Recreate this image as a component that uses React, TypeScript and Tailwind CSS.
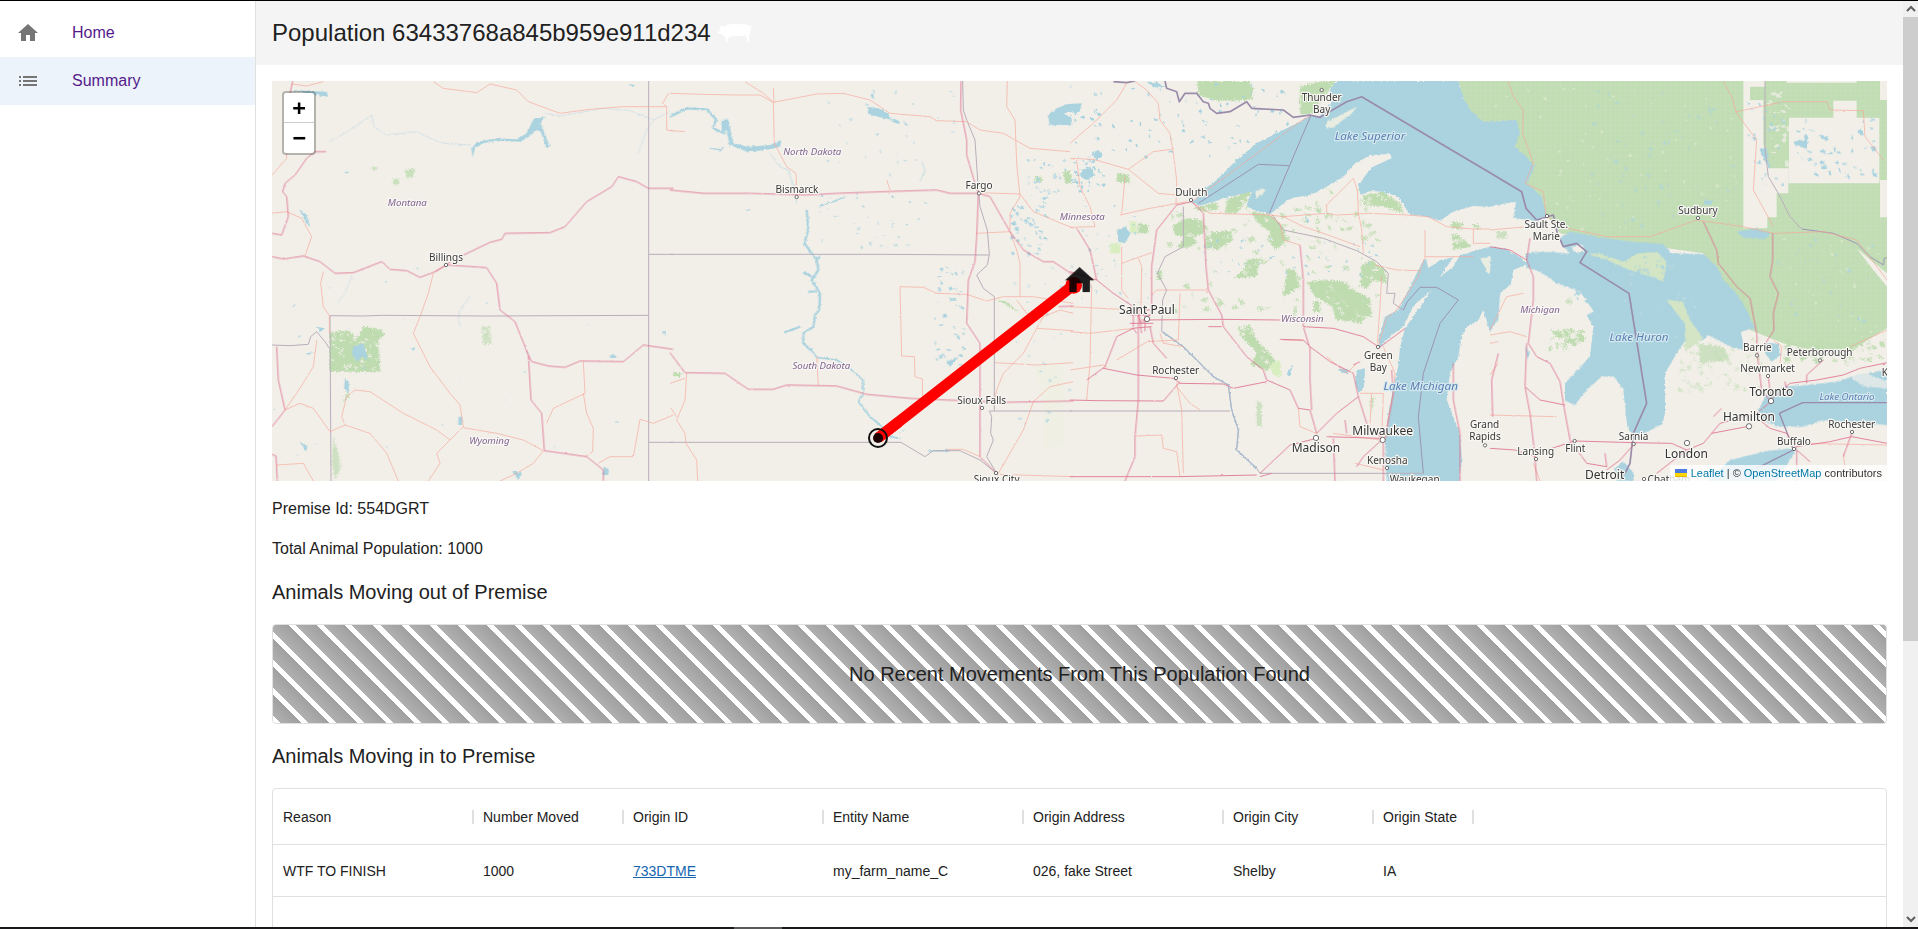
import type { ReactNode } from "react";

type Label = { t: string; x: number; y: number; k?: "city" | "big" | "state" | "lake" | "lakeSmall" };

// The map is drawn in units of a third of a pixel, in four side-by-side tiles.
const TILE_A = "translate(-6 -3)";
const TILE_B = "translate(1194 -3)";
const TILE_C = "translate(2394 -3)";
const TILE_D = "translate(3654 -3)";

const WATER = "#aad3df";
const LAND = "#f2efe9";
const FOREST = "#bedcb0";

function speckles(seed: number, count: number, x: number, y: number, w: number, h: number, size: number) {
  let s = seed;
  const next = () => {
    s = (s * 16807) % 2147483647;
    return s / 2147483647;
  };
  let d = "";
  for (let i = 0; i < count; i++) {
    const px = Math.round(x + next() * w);
    const py = Math.round(y + next() * h);
    const a = Math.round(2 + next() * size);
    const b = Math.round(2 + next() * size);
    const c = Math.round((next() - 0.4) * size);
    d += `M${px} ${py}l${a} ${-c}l${Math.round(a / 2)} ${b}l${-a} ${c}z`;
  }
  return d;
}

const labels: { tile: string; items: Label[] }[] = [
  {
    tile: TILE_A,
    items: [
      { t: "Montana", x: 412, y: 378, k: "state" },
      { t: "Billings", x: 528, y: 542 },
      { t: "Wyoming", x: 658, y: 1091, k: "state" },
    ],
  },
  {
    tile: TILE_B,
    items: [
      { t: "North Dakota", x: 427, y: 225, k: "state" },
      { t: "Bismarck", x: 381, y: 340 },
      { t: "Fargo", x: 927, y: 326 },
      { t: "South Dakota", x: 454, y: 867, k: "state" },
      { t: "Sioux Falls", x: 935, y: 971 },
      { t: "Sioux City", x: 980, y: 1210 },
      { t: "Minnesota", x: 1237, y: 419, k: "state" },
    ],
  },
  {
    tile: TILE_C,
    items: [
      { t: "Thunder", x: 755, y: 63 },
      { t: "Bay", x: 755, y: 99 },
      { t: "Lake Superior", x: 900, y: 180, k: "lake" },
      { t: "Duluth", x: 364, y: 347 },
      { t: "Saint Paul", x: 231, y: 701, k: "big" },
      { t: "Wisconsin", x: 697, y: 727, k: "state" },
      { t: "Rochester", x: 317, y: 881 },
      { t: "Green", x: 925, y: 836 },
      { t: "Bay", x: 925, y: 872 },
      { t: "Lake Michigan", x: 1052, y: 931, k: "lake" },
      { t: "Milwaukee", x: 938, y: 1066, k: "big" },
      { t: "Madison", x: 738, y: 1116, k: "big" },
      { t: "Kenosha", x: 952, y: 1152 },
      { t: "Waukegan", x: 1034, y: 1208 },
      { t: "Grand", x: 1244, y: 1045 },
      { t: "Rapids", x: 1245, y: 1081 },
    ],
  },
  {
    tile: TILE_D,
    items: [
      { t: "Sudbury", x: 624, y: 403 },
      { t: "Sault Ste.", x: 169, y: 443 },
      { t: "Marie", x: 169, y: 479 },
      { t: "Michigan", x: 150, y: 700, k: "state" },
      { t: "Lake Huron", x: 447, y: 782, k: "lake" },
      { t: "Barrie", x: 802, y: 812 },
      { t: "Peterborough", x: 989, y: 829 },
      { t: "Newmarket", x: 833, y: 876 },
      { t: "Toronto", x: 844, y: 949, k: "big" },
      { t: "Lake Ontario", x: 1071, y: 961, k: "lakeSmall" },
      { t: "Hamilton", x: 777, y: 1023, k: "big" },
      { t: "Rochester", x: 1085, y: 1045 },
      { t: "Buffalo", x: 912, y: 1096 },
      { t: "Sarnia", x: 431, y: 1079 },
      { t: "Flint", x: 256, y: 1117 },
      { t: "Lansing", x: 137, y: 1124 },
      { t: "London", x: 589, y: 1133, k: "big" },
      { t: "Detroit", x: 344, y: 1196, k: "big" },
      { t: "Chatham", x: 537, y: 1209 },
      { t: "Kingston", x: 1238, y: 888 },
    ],
  },
];

const labelStyles = {
  city: { size: 30, fill: "#3a3a3a", italic: false },
  big: { size: 36, fill: "#333333", italic: false },
  state: { size: 29, fill: "#82648f", italic: true },
  lake: { size: 35, fill: "#5a7fb4", italic: true },
  lakeSmall: { size: 29, fill: "#5a7fb4", italic: true },
};

function MapLabels() {
  return (
    <>
      {labels.map((group) => (
        <g key={group.tile} transform={group.tile}>
          {group.items.map((l) => {
            const s = labelStyles[l.k ?? "city"];
            const halo = l.k === "lake" || l.k === "lakeSmall" ? "#d5e9ef" : "#f8f7f4";
            return (
              <text
                key={l.t + l.x + l.y}
                x={l.x}
                y={l.y}
                textAnchor="middle"
                fontSize={s.size}
                fontStyle={s.italic ? "italic" : "normal"}
                fill={s.fill}
                stroke={halo}
                strokeWidth={7}
                strokeLinejoin="round"
                paintOrder="stroke"
              >
                {l.t}
              </text>
            );
          })}
        </g>
      ))}
    </>
  );
}

function Dots({ tile, small, large = [] }: { tile: string; small: number[][]; large?: number[][] }) {
  return (
    <g transform={tile} fill="#ffffff" stroke="#555555" strokeWidth={2.5}>
      {small.map(([x, y]) => (
        <circle key={`${x}-${y}`} cx={x} cy={y} r={5} />
      ))}
      {large.map(([x, y]) => (
        <circle key={`${x}-${y}`} cx={x} cy={y} r={8} />
      ))}
    </g>
  );
}

function MapDrawing() {
  return (
    <svg
      className="block h-full w-full"
      viewBox="0 0 4845 1200"
      preserveAspectRatio="xMidYMid slice"
      fontFamily='"Noto Sans", sans-serif'
      role="img"
      aria-label="Map of population movements"
    >
      <defs>
        <filter id="coast" x="0" y="0" width="100%" height="100%">
          <feTurbulence type="fractalNoise" baseFrequency="0.12" numOctaves={3} seed={4} />
          <feDisplacementMap in="SourceGraphic" scale={9} xChannelSelector="R" yChannelSelector="G" />
        </filter>
        <filter id="wood" x="0" y="0" width="100%" height="100%">
          <feTurbulence type="fractalNoise" baseFrequency="0.2" numOctaves={2} seed={9} />
          <feDisplacementMap in="SourceGraphic" scale={18} xChannelSelector="R" yChannelSelector="G" />
        </filter>
        <filter id="road" x="0" y="0" width="100%" height="100%">
          <feTurbulence type="fractalNoise" baseFrequency="0.09" numOctaves={2} seed={2} />
          <feDisplacementMap in="SourceGraphic" scale={5} xChannelSelector="R" yChannelSelector="G" />
        </filter>
        <pattern id="grid" width="15" height="15" patternUnits="userSpaceOnUse">
          <rect width="15" height="15" fill="#c0ddb4" />
          <path d="M0 0H15M0 0V15" stroke="#cfe3c4" strokeWidth={2} />
        </pattern>
      </defs>

      <rect width="4845" height="1200" fill={LAND} />

      {/* Forests and parks */}
      <g transform={TILE_D}>
        <path
          fill="url(#grid)"
          d="M-95 3H1191V745L1100 800 990 815 880 790 780 750 640 520 500 500 340 485 210 460 170 405 80 370 0 130-60 125Z"
        />
        <g fill={LAND}>
          <path d="M760 3H825V20H780V60H820V190L835 265H895V340H860V412H832V445H760Z" />
          <path d="M897 113H1168V310H895V265H897ZM1030 62H1100V113H1030ZM890 3H1100V8H890ZM1170 3H1191V60H1170ZM1170 300H1191V412H1170Z" />
          <path d="M1100 505L1191 580V620L1150 570Z" />
        </g>
        <path d={speckles(102, 70, 0, 10, 740, 440, 7)} fill="#dde9d0" opacity={0.7} />
        <path d={speckles(105, 40, 870, 470, 310, 300, 7)} fill="#dde9d0" opacity={0.7} />
        <path d={speckles(108, 30, 830, 20, 60, 240, 12)} fill={LAND} opacity={0.7} />
      </g>
      <g filter="url(#wood)">
        <g transform={TILE_A} fill={FOREST}>
          <path d="M178 755L235 752 262 775 280 740 335 750 345 765 325 780 330 875H178Z" />
          <path d={speckles(120, 45, 180, 755, 140, 110, 7)} fill={LAND} />
          <path d="M635 740L660 738 668 790 640 795Z M190 1070L205 1120 213 1160 195 1200 185 1150Z M215 970L235 930 240 950Z" opacity={0.7} />
          <path d={speckles(121, 14, 635, 740, 30, 50, 7)} fill={LAND} />
          <path d="M370 295L390 298 385 315 368 315ZM405 270L435 265 430 290 410 295ZM308 260H320V270H308Z" opacity={0.8} />
        </g>
        <g transform={TILE_C} fill={FOREST}>
          <path d="M380 3H535L550 25 545 60 440 62 385 45ZM690 20L745 5H800L760 50 730 100 690 105Z" />
          <path d="M310 435L350 415 400 420 400 460 370 470 380 490 350 505 320 500 345 470 312 465ZM410 460L480 450 490 480 440 510 405 505ZM470 360L540 330 545 345 500 400 465 400ZM545 395L600 405 640 440 650 480 620 510 590 480 600 455 560 425ZM370 385L440 365 445 390 400 395Z" />
          <path d="M530 540L570 535 560 590 490 595 520 570ZM650 565L675 570 690 620 640 650ZM710 605L770 600 830 605 840 625 900 655 905 700 870 730 795 720 790 680 735 650ZM875 555L905 540 945 570 950 610 910 600 890 625 870 620Z" />
          <path d="M505 740L540 735 560 780 600 820 620 850 590 870 540 855 560 820 510 765ZM730 665H750V695H730ZM880 345L940 335 990 370 1000 400 940 380 880 375ZM260 575L275 570 275 600 262 600ZM205 430L235 435 235 460 205 460ZM140 280L175 285 180 310 140 305ZM1145 425L1180 430 1175 450 1145 445ZM1145 460L1165 465 1205 500 1150 510ZM1205 435L1230 435 1225 450ZM-20 280L5 285 5 310-15 310Z" />
          <g fill={LAND}>
            <path d={speckles(130, 60, 310, 330, 340, 180, 8)} />
            <path d={speckles(131, 80, 640, 540, 310, 190, 8)} />
            <path d={speckles(132, 30, 500, 730, 120, 140, 8)} />
            <path d={speckles(133, 25, 880, 335, 120, 60, 9)} />
            <path d={speckles(134, 20, 1145, 420, 70, 90, 8)} />
            <path d={speckles(135, 12, 490, 535, 80, 60, 7)} />
          </g>
          <path d="M600 850L630 840 635 890 605 885Z M180 425H200V460H180Z M120 490L150 490 150 520 120 520Z" fill="#d9eec0" />
          <path d="M560 965H575V1040H560ZM900 960L915 945 905 1000Z" opacity={0.7} />
          <path d={speckles(71, 90, 290, 380, 640, 330, 16)} opacity={0.8} />
          <path d={speckles(22, 40, 520, 320, 420, 130, 12)} opacity={0.8} />
        </g>
        <g transform={TILE_B} fill={FOREST}>
          <path d="M10 875L35 880 30 892 12 888ZM975 655L1010 665 1050 700 1010 675ZM1180 275L1200 270V300L1185 298ZM1095 290H1115V305H1095Z" />
          <path d="M1090 860L1180 850V1100H1120V960Z" fill="#eaf2da" opacity={0.4} />
        </g>
        <g transform={TILE_D} fill={FOREST}>
          <path d={speckles(15, 40, 175, 745, 95, 60, 14)} />
          <path d={speckles(91, 110, 560, 770, 250, 160, 10)} opacity={0.55} />
          <path d={speckles(37, 70, 880, 780, 300, 60, 14)} />
          <path d="M625 790L700 800 720 840 630 850ZM20 455H50V475H20ZM230 655H245V672H230Z" opacity={0.7} />
        </g>
      </g>

      {/* Lakes and rivers */}
      <g filter="url(#coast)">
        <g transform={TILE_C} fill={WATER}>
          <path d="M365 368L400 330 440 300 500 240 560 190 620 160 690 125 715 108 750 108 790 60 775 35 800 3H1165L1180 50 1200 90 1240 125 1340 120 1350 160 1335 200 1370 230 1395 260 1370 310 1415 350 1425 390 1430 405 1400 425 1380 420 1330 415 1338 365 1280 375 1260 380 1210 378 1150 395 1110 422 1060 408 1020 405 985 350 940 335 900 333 872 345 865 315 905 262 965 235 960 222 900 225 850 255 820 290 770 320 720 345 660 355 600 403 550 390 530 375 545 335 500 345 440 362 390 377Z" />
          <path d="M950 1203L945 1090 955 1000 975 900 985 860 990 800 1005 745 1050 680 1085 630 1060 650 1030 680 1000 740 965 765 930 800 925 780 945 710 985 690 1020 620 1055 550 1068 535 1075 565 1110 540 1150 532 1110 590 1150 560 1170 525 1260 500 1300 505 1350 530 1372 552 1330 570 1322 615 1290 640 1285 720 1260 755 1240 690 1225 720 1190 740 1175 770 1165 830 1140 880 1130 960 1150 1010 1170 1060 1175 1130 1168 1203Z" />
          <path d="M862 870L885 865 882 920 865 938 855 910ZM803 868L830 865 835 880 815 878ZM140 450L165 440 182 460 165 490 145 485ZM65 220L85 210 98 225 80 240ZM35 270L60 260 75 285 50 300 30 290ZM230 5L260 8 290 20 250 22ZM655 870L668 855 660 890 650 885Z" />
          <path d="M705 405L718 425 712 430Z" />
          <path d={speckles(11, 90, 0, 10, 680, 220, 8)} />
          <path d={speckles(5, 34, 0, 220, 100, 120, 8)} />
          <path d={speckles(17, 50, 400, 470, 520, 110, 7)} opacity={0.9} />
          <path d={speckles(29, 40, 0, 340, 320, 340, 6)} opacity={0.7} />
        </g>
        <g transform={TILE_D} fill={WATER}>
          <path d="M108 520L160 515 240 520 215 495 210 475 240 455 330 472 420 485 520 492 545 520 640 522 680 560 700 600 740 640 770 690 795 745 752 755 765 810 720 800 655 765 632 785 625 750 590 775 560 820 525 880V1000L518 1030 480 1052 430 1078 412 1040 400 930 372 890 335 890 290 930 255 975 225 962 225 910 300 830 310 740 290 705 312 695 270 635 200 610 150 575 108 562Z" />
          <path d="M650 1203L720 1140 830 1113 922 1103 900 1140 860 1203ZM800 1000L830 942 880 920 950 915 1040 905 1100 885 1191 870V1035L1000 1020 940 1040 870 1040 815 1022Z" />
          <path d="M375 1165L400 1145 432 1180V1203H380ZM825 790L865 790 872 825 845 845 825 820ZM740 455L800 445 842 460 825 478 760 472ZM105 800L120 820 112 838ZM808 205L830 205 838 260 822 240ZM925 180L955 180 950 205 928 198ZM645 360L668 362 662 375 640 372Z" />
          <path d={speckles(41, 50, 910, 120, 240, 170, 12)} />
          <path d={speckles(58, 60, 300, 10, 450, 430, 9)} opacity={0.6} />
          <path d={speckles(63, 30, 860, 470, 320, 260, 9)} opacity={0.6} />
          <path d={speckles(77, 20, 250, 580, 60, 80, 9)} />
          <path d={speckles(79, 26, 770, 60, 110, 260, 8)} />
          <path d="M1080 890L1130 880 1191 905V925L1120 920Z" fill={LAND} opacity={0.7} />
        </g>
        <g transform={TILE_B} fill={WATER}>
          <path d="M1135 105L1160 85 1195 72 1235 70 1230 95 1180 100 1205 115 1203 135 1138 136Z" />
          <path d="M592 80L625 85 655 100 665 120 625 110 595 102ZM670 115L690 125 688 132 665 125ZM700 120L715 138 705 135ZM155 120L175 118 190 190 235 200 300 195 335 180 330 200 300 208 235 216 178 195 170 150 155 160Z" />
          <path d="M830 845L865 830 850 850 840 860ZM840 655H860V662H840ZM600 45L610 40 612 60Z" />
          <path d={speckles(13, 45, 1020, 340, 100, 180, 9)} />
          <path d={speckles(31, 30, 1070, 230, 120, 120, 7)} />
          <path d={speckles(19, 45, 790, 560, 90, 300, 8)} />
          <path d={speckles(23, 35, 440, 330, 330, 170, 6)} opacity={0.8} />
          <path d={speckles(67, 30, 470, 30, 380, 260, 6)} opacity={0.7} />
          <path d={speckles(83, 22, 1030, 560, 170, 520, 7)} opacity={0.7} />
          <g fill="none" stroke={WATER} strokeLinejoin="round">
            <path strokeWidth={7} d="M0 110L50 85 110 88 138 118 130 145 165 160" />
            <path strokeWidth={7} d="M410 390L415 450 403 490 440 540 445 570 425 600 450 640 448 690 435 705 430 740 400 760 400 790 425 812M345 757L390 740M440 540L450 530M400 577L425 590M415 635H440" />
            <path strokeWidth={5} d="M425 812L440 832 500 840 545 870 578 900 580 940 565 965 600 1010 635 1040 660 1070 690 1075M775 1113L840 1112" />
            <path strokeWidth={4} d="M450 378L490 365 525 350M120 205L155 210 160 200M225 390H240" />
            <path strokeWidth={2} d="M300 220L330 260 355 270 370 320 380 370M755 245L765 270 750 305M690 1060L705 1045" />
          </g>
        </g>
        <g transform={TILE_A} fill={WATER}>
          <path d="M790 118L825 110 812 130 822 155 840 200 830 205 812 155 800 150 775 172 750 185 680 182 640 190 615 205 608 230 603 205 625 185 680 175 740 178 770 160Z" />
          <path d="M88 388L110 405 120 438 108 430ZM250 800L280 790 295 840 275 830 262 845 245 820ZM225 895L238 910 235 940 222 925ZM60 30L170 35 175 50 120 42ZM420 803L435 805 430 812ZM565 1010H576V1035H565ZM90 1085L112 1100 108 1115ZM140 740L165 745 150 755ZM1175 755L1187 752V768ZM1020 826H1038V834H1020ZM1000 1165H1015V1185H1000ZM725 1172L755 1178 745 1200ZM108 820L130 817 115 825ZM1075 12L1095 15 1088 22ZM225 275H235V280H225Z" />
          <path d={speckles(97, 24, 10, 500, 1120, 640, 5)} opacity={0.7} />
          <path fill="none" stroke="#cfdfe4" strokeWidth={2.5} d="M180 185L240 150 305 105 312 140 350 165 440 155 480 175 520 190 603 195M825 100L870 108 1000 85 1080 92 1150 120 1130 150 1105 220M600 650L570 690 565 720 572 740M245 590L225 640 200 670M1150 120L1200 95" />
        </g>
      </g>

      {/* Islands and peninsulas inside the lakes */}
      <g filter="url(#coast)">
        <path transform={TILE_C} fill="#e9ece0" d="M765 145L772 125 862 80 845 100 790 142ZM1230 535L1262 530 1260 590ZM555 335L575 325 590 330 560 355Z" />
        <path transform={TILE_D} fill="#d3e5c4" d="M290 522L330 520 400 545 440 522 500 515 530 545 520 605 500 595 450 580 400 562 350 540ZM530 660L578 664 600 720 640 775 585 815 585 730 560 700Z" />
        <path transform={TILE_D} fill={WATER} d={speckles(140, 45, 310, 515, 210, 75, 8)} />
        <path transform={TILE_D} fill={LAND} d={speckles(141, 30, 400, 520, 240, 250, 7)} opacity={0.25} />
        <path transform={TILE_D} fill={LAND} d="M245 500L275 492 285 515 255 518ZM130 575L150 580 130 600Z" />
      </g>

      {/* Administrative borders */}
      <g fill="none" stroke="#b9aeba" strokeWidth={3}>
        <path transform={TILE_A} d="M1136 3V1203M180 707L280 708 340 706 650 708 1136 706M180 707L183 1203M1136 523H1210M1136 1087H1210M6 795L60 797 115 793 122 770 140 755 165 785 178 805" />
        <path transform={TILE_B} d="M0 523L640 523 958 525M0 1087H693L765 1130 790 1112 870 1112 930 1140 980 1180M878 3L880 90 892 125 915 180 925 330 930 380 952 450 958 523 952 555 920 585 940 625 973 650V992M958 993H1205M958 993L965 1010 962 1060 970 1080 950 1130 980 1180" />
        <path transform={TILE_C} d="M0 993H480M340 380V500L285 530 262 580 290 630 278 660 275 755 340 800 390 850 430 890 475 915 485 990 505 1050 500 1110 560 1165 570 1180H1060M605 403L640 450 760 475 860 512 920 545 955 580 950 640 975 640 970 670 1000 690" />
        <path transform={TILE_D} d="M825 3V205L835 290 865 340 900 410 935 447" />
      </g>
      <g fill="none" stroke="#9b93b4" strokeWidth={3}>
        <path transform={TILE_C} d="M385 370L565 253 657 257M722 108L598 400M1000 690L1012 665 1050 622H1100L1165 660 1110 730 1060 880 1045 1010 1060 1180" />
        <path transform={TILE_D} d="M935 447L1030 460 1100 490 1140 530 1180 555 1183 535 1191 533" />
      </g>
      <g filter="url(#coast)">
        <path
          transform={TILE_C}
          d="M278 755L340 800 390 850 430 890 475 915 485 990 505 1050 500 1110 560 1165"
          fill="none"
          stroke="#a9bccf"
          strokeWidth={4}
        />
      </g>
      <g fill="none" stroke="#9a8bab" strokeWidth={6} strokeLinejoin="round">
        <path
          transform={TILE_C}
          d="M130 5L170 8 195 3M285 3L290 25 320 35 328 65 345 40 380 40 400 65 415 70 420 85 440 100 480 95 530 65 545 85 640 90 670 112 720 105 750 112 830 65 875 50 1260 278 1355 335 1368 385 1400 420 1450 405 1462 460 1480 500 1520 490 1550 515 1530 548 1677 640 1730 970 1690 1060 1680 1150 1665 1180"
          strokeWidth={5}
        />
        <path transform={TILE_D} d="M1191 968H938L868 1000 890 1055 910 1110 800 1165" strokeWidth={4} />
      </g>

      {/* Secondary roads */}
      <g fill="none" stroke="#f7a79a" strokeWidth={2} strokeLinejoin="round" filter="url(#road)">
        <path
          transform={TILE_A}
          d="M490 5L520 25 620 38 660 12 740 30 775 65 870 100 960 88 1060 80 1190 80 1190 150 1210 152M1190 80L1178 70 1195 40M65 12L110 18 160 5M6 285L50 235V215M6 400L50 395 95 415 125 470 105 528M160 575L152 610 160 680 178 707 178 760M490 580L475 640 450 710 430 760 480 860 540 940 570 975 580 1040 540 1080 500 1120 510 1150 475 1203M255 930L300 935 400 1000 500 1050 540 1080M255 930L230 950 215 1010 225 1035 180 1055M225 1035L300 1060 350 1120 385 1203M580 1043L680 1060 760 1080 820 1112 790 1150 740 1180 690 1203M940 845L945 940 850 985 830 1030M940 940L950 1000 970 1045 968 1115 945 1130M985 1150L1020 1130 1090 1130 1110 1018 1150 1030 1210 1005M45 990L90 970 130 985 180 1055M140 780L130 860 90 925 45 990M20 1155L100 1150 130 1203"
        />
        <path
          transform={TILE_B}
          d="M0 40L100 43 200 45 270 45 310 67 440 42 520 40 600 60 660 100 780 110 800 122 890 125 930 150 1000 160 1080 205 1200 215M225 5L280 40 310 67 313 190 350 260 378 280 380 350M312 67L310 25M0 152L45 155M1012 3L1010 80 1035 120 1040 250 1050 350 1020 400 1020 450M925 338L1050 342 1090 395 1210 445M920 460L1020 455 1040 510 1050 550V650M690 620L760 622 800 640 890 643 950 663 1000 650 1090 650 1210 670M690 620L695 828 733 830 735 890 757 897 758 948M1210 700L1170 690 1120 710 1070 700 1040 660M1120 710L1100 745 1210 752M1100 745L1060 820 1000 880 980 930 975 960M975 848L1100 855 1210 848M440 830L445 915M50 880L45 960 20 1020 45 1060 48 1090 80 1140 83 1203M0 910L45 895M0 980L20 1010M1210 905L1140 920 1090 965 1060 1050 985 1180M990 1183L1210 1190M830 1108L880 1108 930 1130M650 300L660 330"
        />
        <path
          transform={TILE_C}
          d="M170 10L140 60 70 130 0 190M195 5L230 30 265 70 270 120 300 160 310 220 320 300 318 375M0 235L70 238 175 268 265 340 318 345M175 268L250 215 305 208M150 405L240 385 350 365M155 500V630L175 655M155 405L165 290M20 240L30 320 60 380 75 440 0 442M155 550L245 518M205 535L215 560 213 680M365 365L690 125 720 108M370 370L420 400 600 405 640 410 770 400 800 405 900 400 1010 405 1075 410 1130 440 1210 447 1260 447M770 400L770 375 850 295 862 330 865 400 875 450 880 520M640 410L700 440 760 460 870 500M590 400L630 430 640 480 690 495M915 555L980 570 1050 572M1065 450V530L1210 530M1065 530L1045 590 980 690 950 715 925 795M935 590L930 680 922 790M640 780L700 782M245 645L260 630 410 630 412 640 M330 640L325 780 230 785M0 680L190 690M0 755L60 760 190 745M55 600L65 620 60 850 50 960M0 870L100 855 110 862M320 910L335 990 340 1180M320 920L360 970 390 990M195 1068L275 1065 280 1105 320 1115 330 1190M685 985L690 1040 740 1060M870 940H940L935 1080M860 850L830 880 770 830M790 1060L860 1070 930 1080M855 1150L940 1170M905 940L900 1030M940 1090L970 940 975 880 940 800M270 760L280 790 340 800M140 840L240 780M1210 447V490H1260"
        />
        <path
          transform={TILE_D}
          d="M55 5L70 50 100 90 98 160 130 250 105 310 160 335 168 405 210 440 350 470 480 470 620 420 760 440 850 460 1000 455 1100 480 1191 600M700 5L725 50 740 100 800 180 790 330 850 440M740 95L880 65 1010 65 1020 90 1120 92 1125 170 1180 240M0 450L110 440M0 750L30 690 50 650 100 640M0 765L60 755 110 770M0 1005L200 1010M0 790L25 785M850 780L875 800 870 850M1191 750L1080 800M930 1090L1191 1095M1060 1120L1070 1203M130 1150L150 1203M0 885L25 850"
        />
      </g>

      {/* Highways */}
      <g fill="none" stroke="#df6f8c" strokeWidth={2.5} strokeLinejoin="round" filter="url(#road)">
        <path
          transform={TILE_A}
          d="M68 3L60 40M135 215L110 235 75 285 45 310 38 335 50 350 55 410 35 465 6 460M135 215H168M6 530L40 537 100 528 150 545 195 580 250 578 335 545 360 568 410 572 450 592 495 575 560 535 660 487 695 478 705 460 840 458 885 440 950 365 1025 320 1045 290 1100 305 1135 325 1210 325M495 575L530 555 650 563 680 610 690 690 735 725 775 825 785 845 835 858 885 862 930 843 1060 845 1120 795 1210 808M775 825L783 960 815 1000 823 1112 950 1130 1000 1170V1203M20 800L25 900 45 990 6 1040M6 1123L18 1128 22 1203"
        />
        <path
          transform={TILE_B}
          d="M0 330L100 340 240 340 410 345 500 340 640 335 800 330 840 340 925 340M0 818L45 878 165 880 235 928 310 928 350 915 500 918 590 943 720 955 830 960 1000 967 1210 963M873 3L872 90 890 180 890 225 912 300 925 340 920 470 915 545 895 600 890 730 930 790V1130L985 1185M925 340L960 350 1020 455 1060 510 1120 545 1150 545 1210 585M1165 680L1210 678"
        />
        <path
          transform={TILE_C}
          d="M0 575L80 600 130 640 190 680 215 730 245 700 245 560 260 450 320 375 365 365 400 400 408 560 415 630 455 705 460 740 530 830 580 870 590 900 660 930 685 985 720 990 740 1060M20 445L60 510 80 600M215 720L455 718 630 720M200 760L190 745 140 770 105 860 50 900M240 740L250 790 290 835M205 700V960L195 1070 195 1130 165 1203M0 960L80 962 280 963 330 905M100 865L200 885 310 895 330 910 460 912 490 925 590 905M0 1190L320 1190 560 1185M570 1180L660 1095 740 1075M740 1060L800 1000 865 950 850 880 780 845 720 800 720 900 725 990M455 740H415M700 740L718 800M630 778L700 780 720 800M690 495L700 600V740L790 745 880 770 925 800M850 855L870 845M865 950L890 1030 935 1075M770 1070L930 1075M790 1075L795 1203M935 1080L880 1130 860 1160M925 805L1005 745M940 1090V1203M945 1080L970 940 965 870M825 1020L830 1060M605 1180L570 1190M170 690L240 690M185 745L245 740M205 690L215 760M190 705V740M225 700V755M180 705H240M180 730H250M1150 850V960L1170 1060V1203"
        />
        <path
          transform={TILE_D}
          d="M0 500L60 510 110 540 120 475M110 540L130 590V660L115 790 140 830 180 850 210 905 220 970 240 1080 290 1150 350 1160M110 790L105 920 120 1000 135 1130 140 1203M105 920L150 960 225 975M0 1105L75 1110 137 1130M25 820L5 900 8 1010M137 1120L255 1083 430 1088 545 1090 590 1110 640 1090 690 1030 800 1000 842 965M640 425L680 510 685 550 740 620 780 655 800 760 802 825 815 930 842 965M848 460V540L840 590 865 640 850 700 852 750 820 800M842 960L900 910 980 900 1060 885 1110 865 1191 848M950 910V885L1000 840M835 890L843 960M790 1005L840 1045 890 1060 920 1105M665 1060L770 1040M920 1100L1020 1085 1085 1070 1191 1090M920 1110L960 1145M1085 1060L1060 1130M430 1095L390 1140 350 1170M345 1120L350 1160M590 1110L500 1180M670 1010L695 985M885 905L890 930M920 1110V1203"
        />
      </g>

      <Dots tile={TILE_A} small={[[528, 555]]} />
      <Dots tile={TILE_B} small={[[380, 351], [927, 340], [936, 984], [978, 1179]]} />
      <Dots tile={TILE_C} small={[[755, 30], [363, 360], [318, 894], [924, 801], [951, 1164], [1245, 1096]]} large={[[231, 717], [738, 1074], [938, 1080]]} />
      <Dots
        tile={TILE_D}
        small={[[171, 408], [624, 414], [801, 826], [990, 841], [834, 888], [1086, 1056], [912, 1107], [431, 1092], [254, 1083], [138, 1137], [462, 1197]]}
        large={[[843, 963], [777, 1039], [591, 1089]]}
      />
      <MapLabels />

      {/* Movement between the origin and the premise */}
      <g>
        <path d="M1818 1071L2405 612" stroke="#ff0000" strokeWidth={33} strokeLinecap="round" />
        <circle cx={2405} cy={613} r={25} fill="#ff0000" />
        <circle cx={1818} cy={1071} r={23} fill={LAND} />
        <path d="M1818 1071L1880 1023" stroke="#ff0000" strokeWidth={33} />
        <circle cx={1818} cy={1071} r={27} fill="none" stroke="#111111" strokeWidth={6} />
        <circle cx={1818} cy={1071} r={15} fill="#1c0000" />
        <path
          transform="translate(2370 545) scale(4.4)"
          d="M10 20v-6h4v6h5v-8h3L12 3 2 12h3v8z"
          fill="#000000"
          fillOpacity={0.88}
        />
      </g>
    </svg>
  );
}

function PigIcon() {
  return (
    <svg className="h-[18px] w-[35px]" viewBox="54 41 104 54" fill="#ffffff" aria-hidden="true">
      <path d="M56 66l7-6 2-6-3-7 8 1 7 1 6-5 14-3 22 1 18 0 11 2 5 4 3-4 2 4-3 5-1 13-3 7-1 15 2 6h-8l-1-10-5-10-6 2-18 2-20 0-6 4-3 7 0 6h-6l0-12-5-7-8-4-7-1-4-3z" />
    </svg>
  );
}

function NavItem({ label, selected, children }: { label: string; selected?: boolean; children: ReactNode }) {
  return (
    <li>
      <a
        href="#"
        aria-current={selected ? "page" : undefined}
        className={`flex h-12 items-center gap-8 px-4 text-base text-[#551a8b] ${selected ? "bg-[#ecf3fb]" : ""}`}
      >
        <svg className="size-6 shrink-0" viewBox="0 0 24 24" fill="#757575" aria-hidden="true">
          {children}
        </svg>
        {label}
      </a>
    </li>
  );
}

const columns = [
  { name: "Reason", width: "w-[200px]" },
  { name: "Number Moved", width: "w-[150px]" },
  { name: "Origin ID", width: "w-[200px]" },
  { name: "Entity Name", width: "w-[200px]" },
  { name: "Origin Address", width: "w-[200px]" },
  { name: "Origin City", width: "w-[150px]" },
  { name: "Origin State", width: "w-[100px]" },
];

const rows = [["WTF TO FINISH", "1000", "733DTME", "my_farm_name_C", "026, fake Street", "Shelby", "IA"]];

function MovementsTable() {
  return (
    <div className="min-h-[400px] rounded-sm border border-[#e0e0e0]">
      <table className="w-full table-fixed border-separate border-spacing-0 text-left text-sm">
        <thead>
          <tr>
            {columns.map((c) => (
              <th key={c.name} className={`h-14 border-b border-[#e0e0e0] p-0 font-normal ${c.width}`}>
                <div className="-mr-px flex items-center justify-between pl-2.5">
                  <span className="whitespace-nowrap">{c.name}</span>
                  <span className="h-3.5 w-0.5 bg-[#e0e0e0]" />
                </div>
              </th>
            ))}
            <td className="border-b border-[#e0e0e0] p-0" />
          </tr>
        </thead>
        <tbody>
          {rows.map((row) => (
            <tr key={row[2]}>
              {row.map((cell, i) => (
                <td key={columns[i].name} className="h-[52px] border-b border-[#e0e0e0] px-2.5 py-0">
                  {i === 2 ? (
                    <a href="#" className="text-[#1565b0] underline">
                      {cell}
                    </a>
                  ) : (
                    cell
                  )}
                </td>
              ))}
              <td className="border-b border-[#e0e0e0] p-0" />
            </tr>
          ))}
        </tbody>
      </table>
    </div>
  );
}

function Scrollbar() {
  return (
    <div className="flex w-[15px] shrink-0 flex-col bg-[#f0f0f0]" aria-hidden="true">
      <svg className="h-4 w-full shrink-0" viewBox="0 0 15 16" fill="none" stroke="#606060" strokeWidth={2}>
        <path d="M4 10L8 6L12 10" />
      </svg>
      <div className="grow-[624] bg-[#cdcdcd]" />
      <div className="grow-[270]" />
      <svg className="h-4 w-full shrink-0" viewBox="0 0 15 16" fill="none" stroke="#606060" strokeWidth={2}>
        <path d="M4 6L8 10L12 6" />
      </svg>
    </div>
  );
}

export default function App() {
  return (
    <div className="flex h-screen flex-col border-t border-black bg-white font-['Liberation_Sans',Arial,sans-serif] text-[#212121]">
      <div className="flex min-h-0 flex-1">
        <nav className="w-64 shrink-0 border-r border-[#e0e0e0]">
          <ul className="py-2">
            <NavItem label="Home">
              <path d="M10 20v-6h4v6h5v-8h3L12 3 2 12h3v8z" />
            </NavItem>
            <NavItem label="Summary" selected>
              <path d="M3 13h2v-2H3v2zm0 4h2v-2H3v2zm0-8h2V7H3v2zm4 4h14v-2H7v2zm0 4h14v-2H7v2zM7 7v2h14V7H7z" />
            </NavItem>
          </ul>
        </nav>

        <main className="min-w-0 flex-1 overflow-hidden">
          <header className="flex h-16 items-center gap-1.5 bg-[#f4f4f4] px-4">
            <h1 className="text-2xl">Population 63433768a845b959e911d234</h1>
            <PigIcon />
          </header>

          <div className="p-4">
            <div className="relative h-[400px] overflow-hidden">
              <MapDrawing />
              <div className="absolute top-2.5 left-2.5 flex flex-col rounded border-2 border-black/25 bg-white bg-clip-padding font-['DejaVu_Sans_Mono',monospace] text-[22px] leading-none font-bold text-black">
                <button aria-label="Zoom in" className="flex size-[30px] items-center justify-center border-b border-[#cccccc]">
                  +
                </button>
                <button aria-label="Zoom out" className="flex size-[30px] items-center justify-center">
                  −
                </button>
              </div>
              <div className="absolute right-0 bottom-0 flex items-center gap-1 bg-white/80 px-[5px] text-[11px] leading-4 text-[#333333]">
                <svg className="h-2 w-3" viewBox="0 0 12 8" aria-hidden="true">
                  <path fill="#4C7BE1" d="M0 0h12v4H0z" />
                  <path fill="#FFD500" d="M0 4h12v3H0z" />
                  <path fill="#E0BC00" d="M0 7h12v1H0z" />
                </svg>
                <p>
                  <a href="#" className="text-[#0078a8]">Leaflet</a> | ©{" "}
                  <a href="#" className="text-[#0078a8]">OpenStreetMap</a> contributors
                </p>
              </div>
            </div>

            <p className="mt-4 text-base">Premise Id: 554DGRT</p>
            <p className="mt-4 text-base">Total Animal Population: 1000</p>

            <h2 className="mt-[15px] mb-4 text-xl leading-8">Animals Moving out of Premise</h2>
            <div className="flex h-[100px] items-center justify-center rounded-sm border border-[#e0e0e0] bg-[repeating-linear-gradient(45deg,#ffffff_0px,#ffffff_5px,#b0b0b0_5px,#a0a0a0_20px)] text-xl">
              No Recent Movements From This Population Found
            </div>

            <h2 className="my-4 text-xl leading-8">Animals Moving in to Premise</h2>
            <MovementsTable />
          </div>
        </main>

        <Scrollbar />
      </div>
      <footer className="flex h-0.5 shrink-0 bg-[#1a181a]">
        <div className="ml-[734px] w-12 bg-[#5a5a5a]" />
      </footer>
    </div>
  );
}
